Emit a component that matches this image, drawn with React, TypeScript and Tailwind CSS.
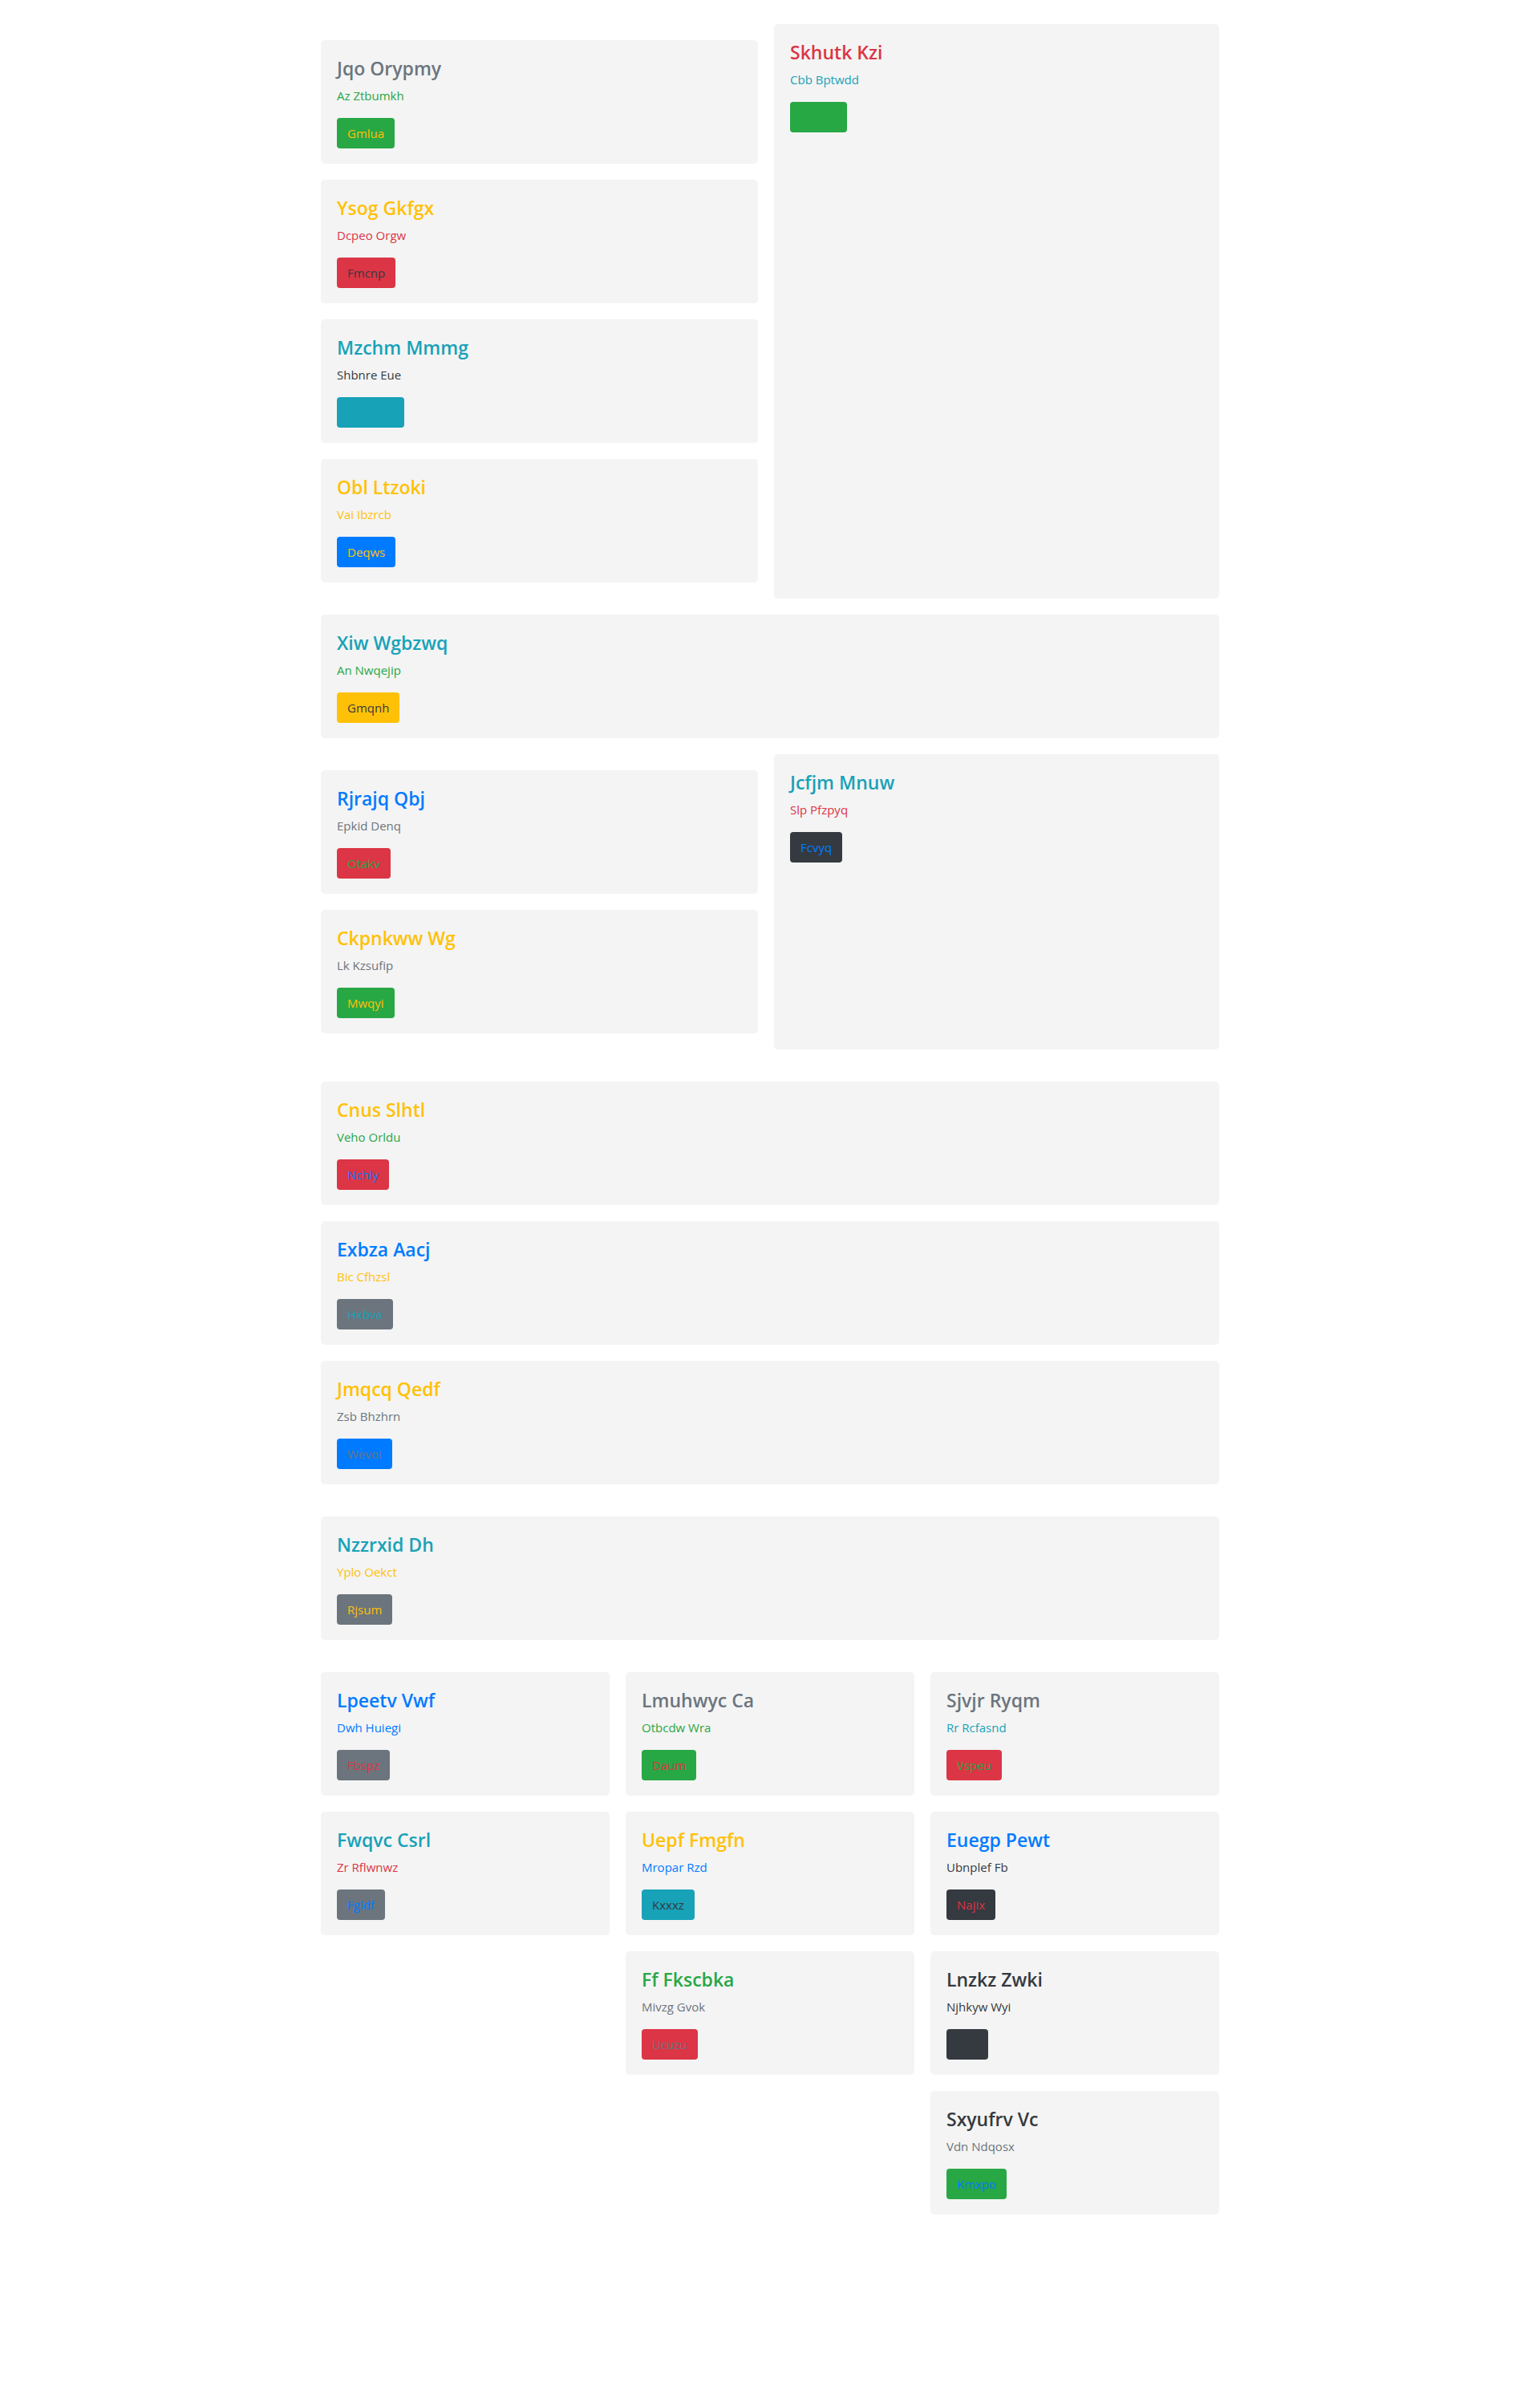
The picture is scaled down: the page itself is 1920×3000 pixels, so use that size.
import React from "react";

type Col = "gray" | "green" | "yellow" | "red" | "teal" | "blue" | "dark";

const TEXT: Record<Col, string> = {
  gray: "text-[#6c757d]",
  green: "text-[#28a745]",
  yellow: "text-[#ffc107]",
  red: "text-[#dc3545]",
  teal: "text-[#17a2b8]",
  blue: "text-[#007bff]",
  dark: "text-[#343a40]",
};

const BG: Record<Col, string> = {
  gray: "bg-[#6c757d]",
  green: "bg-[#28a745]",
  yellow: "bg-[#ffc107]",
  red: "bg-[#dc3545]",
  teal: "bg-[#17a2b8]",
  blue: "bg-[#007bff]",
  dark: "bg-[#343a40]",
};

type CardData = {
  t: string;
  tc: Col;
  s: string;
  sc: Col;
  b: string;
  bb: Col;
  bc: Col;
};

function Card({ d, className = "" }: { d: CardData; className?: string }) {
  return (
    <div className={`rounded-[5px] bg-[#f4f4f4] px-5 pt-[21px] pb-[19px] ${className}`}>
      <h5 className={`mb-2 text-[23px] leading-[29px] font-semibold ${TEXT[d.tc]}`}>{d.t}</h5>
      <p className={`mb-4 text-[15px] leading-[23px] ${TEXT[d.sc]}`}>{d.s}</p>
      <button
        type="button"
        className={`rounded-[4px] border border-transparent px-3 py-1.5 text-[15px] leading-6 ${BG[d.bb]} ${TEXT[d.bc]}`}
      >
        {d.b}
      </button>
    </div>
  );
}

const s1Left: CardData[] = [
  { t: "Jqo Orypmy", tc: "gray", s: "Az Ztbumkh", sc: "green", b: "Gmlua", bb: "green", bc: "yellow" },
  { t: "Ysog Gkfgx", tc: "yellow", s: "Dcpeo Orgw", sc: "red", b: "Fmcnp", bb: "red", bc: "dark" },
  { t: "Mzchm Mmmg", tc: "teal", s: "Shbnre Eue", sc: "dark", b: "Mdqwzk", bb: "teal", bc: "teal" },
  { t: "Obl Ltzoki", tc: "yellow", s: "Vai Ibzrcb", sc: "yellow", b: "Deqws", bb: "blue", bc: "yellow" },
];
const s1Right: CardData = { t: "Skhutk Kzi", tc: "red", s: "Cbb Bptwdd", sc: "teal", b: "Hvnqe", bb: "green", bc: "green" };

const s2: CardData = { t: "Xiw Wgbzwq", tc: "teal", s: "An Nwqejip", sc: "green", b: "Gmqnh", bb: "yellow", bc: "dark" };

const s3Left: CardData[] = [
  { t: "Rjrajq Qbj", tc: "blue", s: "Epkid Denq", sc: "gray", b: "Otakv", bb: "red", bc: "green" },
  { t: "Ckpnkww Wg", tc: "yellow", s: "Lk Kzsufip", sc: "gray", b: "Mwqyi", bb: "green", bc: "yellow" },
];
const s3Right: CardData = { t: "Jcfjm Mnuw", tc: "teal", s: "Slp Pfzpyq", sc: "red", b: "Fcvyq", bb: "dark", bc: "blue" };

const s4: CardData[] = [
  { t: "Cnus Slhtl", tc: "yellow", s: "Veho Orldu", sc: "green", b: "Nchly", bb: "red", bc: "blue" },
  { t: "Exbza Aacj", tc: "blue", s: "Bic Cfhzsl", sc: "yellow", b: "Hxbva", bb: "gray", bc: "teal" },
  { t: "Jmqcq Qedf", tc: "yellow", s: "Zsb Bhzhrn", sc: "gray", b: "Wevoi", bb: "blue", bc: "gray" },
];

const s5: CardData = { t: "Nzzrxid Dh", tc: "teal", s: "Yplo Oekct", sc: "yellow", b: "Rjsum", bb: "gray", bc: "yellow" };

const s6: CardData[][] = [
  [
    { t: "Lpeetv Vwf", tc: "blue", s: "Dwh Huiegi", sc: "blue", b: "Fbspz", bb: "gray", bc: "red" },
    { t: "Fwqvc Csrl", tc: "teal", s: "Zr Rflwnwz", sc: "red", b: "Fgldf", bb: "gray", bc: "blue" },
  ],
  [
    { t: "Lmuhwyc Ca", tc: "gray", s: "Otbcdw Wra", sc: "green", b: "Daum", bb: "green", bc: "red" },
    { t: "Uepf Fmgfn", tc: "yellow", s: "Mropar Rzd", sc: "blue", b: "Kxxxz", bb: "teal", bc: "dark" },
    { t: "Ff Fkscbka", tc: "green", s: "Mivzg Gvok", sc: "gray", b: "Ucuzu", bb: "red", bc: "gray" },
  ],
  [
    { t: "Sjvjr Ryqm", tc: "gray", s: "Rr Rcfasnd", sc: "teal", b: "Vspeu", bb: "red", bc: "green" },
    { t: "Euegp Pewt", tc: "blue", s: "Ubnplef Fb", sc: "dark", b: "Najix", bb: "dark", bc: "red" },
    { t: "Lnzkz Zwki", tc: "dark", s: "Njhkyw Wyi", sc: "dark", b: "Vjrc", bb: "dark", bc: "dark" },
    { t: "Sxyufrv Vc", tc: "dark", s: "Vdn Ndqosx", sc: "gray", b: "Kmxpo", bb: "green", bc: "blue" },
  ],
];

export default function App() {
  return (
    <div className="min-h-[3000px] bg-white font-['Open_Sans','Noto_Sans',sans-serif]">
      <div className="mx-auto flex w-[1120px] flex-col gap-5 pt-[30px]">
        <div className="flex gap-5">
          <div className="flex w-[545px] flex-col gap-5 py-5">
            {s1Left.map((d) => (
              <Card key={d.t} d={d} />
            ))}
          </div>
          <Card d={s1Right} className="flex-1" />
        </div>

        <Card d={s2} />

        <div className="flex gap-5">
          <div className="flex w-[545px] flex-col gap-5 py-5">
            {s3Left.map((d) => (
              <Card key={d.t} d={d} />
            ))}
          </div>
          <Card d={s3Right} className="flex-1" />
        </div>

        <div className="flex flex-col gap-5 py-5">
          {s4.map((d) => (
            <Card key={d.t} d={d} />
          ))}
        </div>

        <Card d={s5} />

        <div className="grid grid-cols-3 items-start gap-5">
          {s6.map((col, i) => (
            <div key={i} className="flex flex-col gap-5 py-5">
              {col.map((d) => (
                <Card key={d.t} d={d} />
              ))}
            </div>
          ))}
        </div>
      </div>
    </div>
  );
}
